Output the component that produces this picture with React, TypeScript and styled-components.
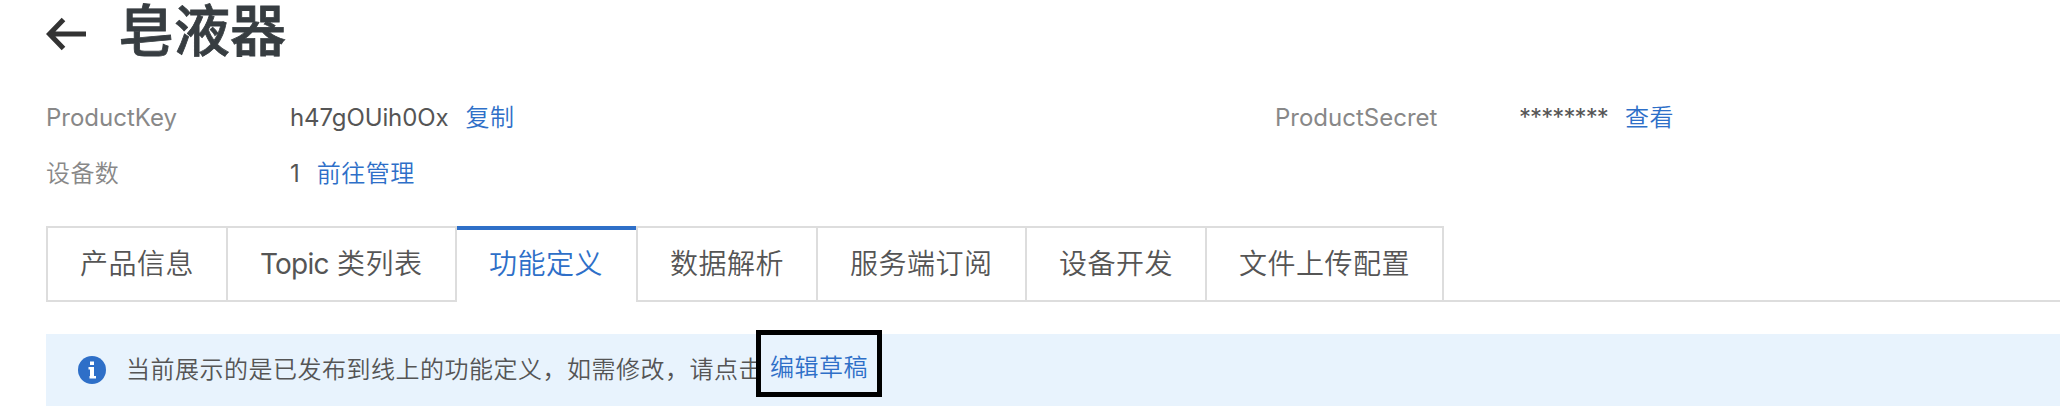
import React from "react";
import styled, { createGlobalStyle, css } from "styled-components";

const GlobalStyle = createGlobalStyle`
  * { box-sizing: border-box; }
  html, body { margin: 0; background: #fff; overflow: hidden; }
  body {
    font-family: Inter, "Noto Sans CJK SC", sans-serif;
    font-weight: 350;
    color: #555;
    white-space: nowrap;
  }
`;

const Page = styled.main`
  height: 408px;
  padding-left: 46px;
`;

const Header = styled.header`
  display: flex;
  align-items: center;
  height: 68px;
`;

const BackIcon = styled.svg`
  width: 42px;
  height: 38px;
  margin-right: 30px;
`;

const Title = styled.h1`
  margin: -6px 0 0;
  font-size: 56px;
  line-height: 68px;
  font-weight: 500;
  -webkit-text-stroke: 0.8px #373d41;
  color: #373d41;
`;

const Info = styled.dl`
  display: grid;
  grid-template-columns: 1229px 1fr;
  grid-auto-rows: 56px;
  margin: 22px 0 24px;
`;

const InfoItem = styled.div`
  display: flex;
  align-items: center;
  font-size: 24px;
  line-height: 56px;
`;

const Label = styled.dt<{ $latin?: boolean }>`
  width: 244px;
  color: #888;
  font-weight: ${(p) => (p.$latin ? 400 : 350)};
  letter-spacing: ${(p) => (p.$latin ? 0 : 0.4)}px;
`;

const Value = styled.dd<{ $tracking?: number }>`
  margin: 0 17px 0 0;
  font-weight: 400;
  letter-spacing: ${(p) => p.$tracking ?? 0}px;
`;

const Link = styled.a`
  color: #2e6fc8;
  font-size: 24px;
  letter-spacing: 0.5px;
  text-decoration: none;
`;

const Tabs = styled.nav`
  display: flex;
  height: 76px;
  border-bottom: 2px solid #ddd;
`;

const Tab = styled.button<{ $width: number; $active?: boolean }>`
  flex: none;
  width: ${(p) => p.$width}px;
  height: 76px;
  padding: 0 0 0 32px;
  border: 2px solid #ddd;
  border-right: 0;
  background: #fff;
  color: #555;
  font: inherit;
  font-size: 28px;
  line-height: 72px;
  letter-spacing: 0.5px;
  text-align: left;
  &:last-child { border-right: 2px solid #ddd; }
  &:has(+ [aria-selected="true"]) {
    border-right: 2px solid #ddd;
    border-bottom-right-radius: 2px;
  }
  ${(p) =>
    p.$active &&
    css`
      padding: 0 0 4px 32px;
      border: 0 solid #2e6fc8;
      border-top-width: 4px;
      line-height: 68px;
      color: #2e6fc8;
    `}
`;

const Latin = styled.span`
  font-weight: 400;
  letter-spacing: -0.8px;
`;

const Notice = styled.section`
  display: flex;
  align-items: center;
  height: 72px;
  margin-top: 32px;
  padding-left: 32px;
  background: #e8f3fd;
  font-size: 24px;
`;

const InfoIcon = styled.svg`
  flex: none;
  width: 28px;
  height: 28px;
  margin-right: 20px;
`;

const NoticeText = styled.span`
  width: 630px;
  line-height: 72px;
  letter-spacing: 0.5px;
`;

const Highlight = styled.div`
  position: relative;
  flex: none;
  align-self: flex-start;
  width: 126px;
  height: 67px;
  margin-top: -4px;
  padding-left: 9px;
  border: 5px solid #000;
  background: #e8f3fd;
  line-height: 66px;
`;

const tabs = [
  { label: "产品信息", width: 180 },
  { latin: "Topic", label: " 类列表", width: 231 },
  { label: "功能定义", width: 179, active: true },
  { label: "数据解析", width: 180 },
  { label: "服务端订阅", width: 209 },
  { label: "设备开发", width: 180 },
  { label: "文件上传配置", width: 239 },
];

export default function App() {
  return (
    <Page>
      <GlobalStyle />
      <Header>
        <BackIcon viewBox="0 0 42 38" fill="none" stroke="#333" strokeWidth="5">
          <path d="M17.5 4.5 3.5 19l14 14.5M3.5 19H40" />
        </BackIcon>
        <Title>皂液器</Title>
      </Header>
      <Info>
        <InfoItem>
          <Label $latin>ProductKey</Label>
          <Value $tracking={-0.1}>h47gOUih0Ox</Value>
          <Link>复制</Link>
        </InfoItem>
        <InfoItem>
          <Label $latin>ProductSecret</Label>
          <Value $tracking={-0.9}>********</Value>
          <Link>查看</Link>
        </InfoItem>
        <InfoItem>
          <Label>设备数</Label>
          <Value>1</Value>
          <Link>前往管理</Link>
        </InfoItem>
      </Info>
      <Tabs role="tablist">
        {tabs.map((t) => (
          <Tab
            key={t.label}
            role="tab"
            aria-selected={!!t.active}
            $width={t.width}
            $active={t.active}
          >
            {t.latin && <Latin>{t.latin}</Latin>}
            {t.label}
          </Tab>
        ))}
      </Tabs>
      <Notice>
        <InfoIcon viewBox="0 0 28 28">
          <circle cx="14" cy="14" r="14" fill="#2e6fc8" />
          <path
            fill="#fff"
            d="M12 5.5h4v3.5h-4zM10.5 11H16v9h2v2.5h-6.5V20H12v-6.5h-1.5z"
          />
        </InfoIcon>
        <NoticeText>
          当前展示的是已发布到线上的功能定义，如需修改，请点击
        </NoticeText>
        <Highlight>
          <Link>编辑草稿</Link>
        </Highlight>
      </Notice>
    </Page>
  );
}
